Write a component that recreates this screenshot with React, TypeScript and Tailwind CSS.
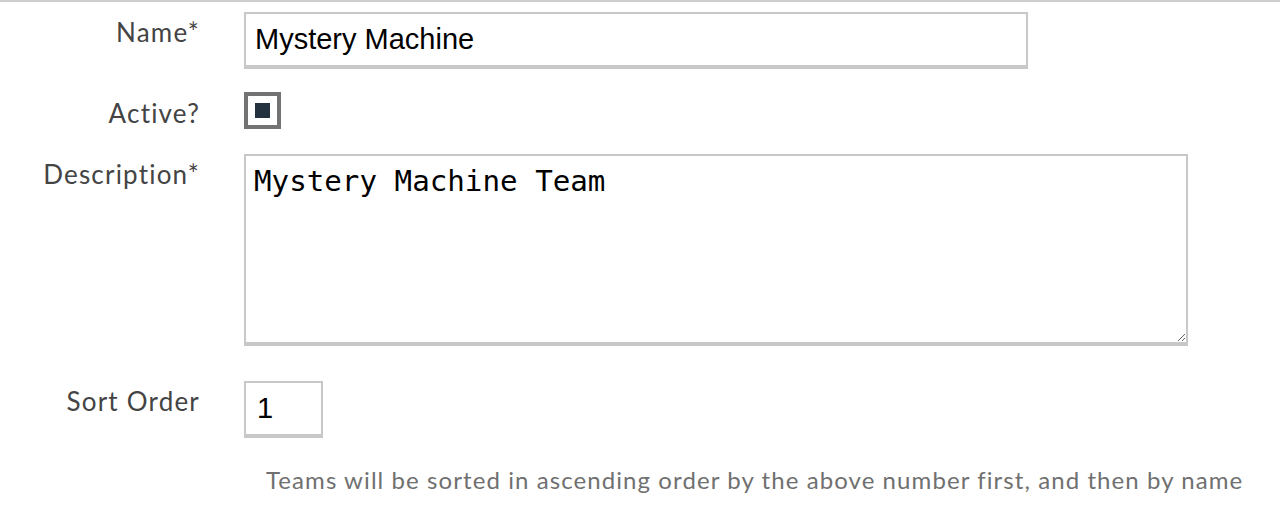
import React, { useState } from "react"

const labelCls = "w-[200px] shrink-0 text-right text-[26px] tracking-[1.2px] leading-8 pt-[4px] text-[#444444]"
const fieldFont = { fontFamily: '"Liberation Sans", Arial, sans-serif' }

const App: React.FC = () => {
    const [name, setName] = useState("Mystery Machine")
    const [active, setActive] = useState(true)
    const [description, setDescription] = useState("Mystery Machine Team")
    const [sortOrder, setSortOrder] = useState("1")

    return (
        <div className="min-h-[516px] w-[1280px] bg-white border-t-2 border-[#cfcfcf]" style={{ fontFamily: 'Lato, "Open Sans", sans-serif' }}>
            <div className="flex flex-col pt-[10px]">
                <div className="flex gap-[44px]">
                    <label htmlFor="team-name" className={labelCls}>Name*</label>
                    <input
                        id="team-name"
                        type="text"
                        value={name}
                        onChange={(e) => setName(e.target.value)}
                        className="w-[784px] h-[57px] border-2 border-b-4 border-[#c8c8c8] px-[9px] text-[29px] text-black outline-none"
                        style={fieldFont}
                    />
                </div>

                <div className="flex gap-[44px] mt-[23px] items-center">
                    <label className={labelCls + " pt-0"}>Active?</label>
                    <button
                        type="button"
                        onClick={() => setActive(!active)}
                        className="w-[37px] h-[37px] border-4 border-[#737373] bg-white flex items-center justify-center"
                    >
                        {active && <span className="block w-[15px] h-[15px] bg-[#243240]" />}
                    </button>
                </div>

                <div className="flex gap-[44px] mt-[25px]">
                    <label htmlFor="team-desc" className={labelCls}>Description*</label>
                    <textarea
                        id="team-desc"
                        value={description}
                        onChange={(e) => setDescription(e.target.value)}
                        className="w-[944px] h-[192px] border-2 border-b-4 border-[#c8c8c8] px-[8px] py-[7px] text-[29.2px] leading-[36px] text-black outline-none"
                        style={{ fontFamily: '"DejaVu Sans Mono", monospace' }}
                    />
                </div>

                <div className="flex gap-[44px] mt-[35px]">
                    <label htmlFor="team-sort" className={labelCls}>Sort Order</label>
                    <input
                        id="team-sort"
                        type="text"
                        value={sortOrder}
                        onChange={(e) => setSortOrder(e.target.value)}
                        className="w-[79px] h-[57px] border-2 border-b-4 border-[#c8c8c8] px-[11px] text-[29px] text-black outline-none"
                        style={fieldFont}
                    />
                </div>

                <p className="ml-[266px] mt-[26px] text-[24px] tracking-[1.08px] leading-8 text-[#707070]">
                    Teams will be sorted in ascending order by the above number first, and then by name
                </p>
            </div>
        </div>
    )
}

export default App
